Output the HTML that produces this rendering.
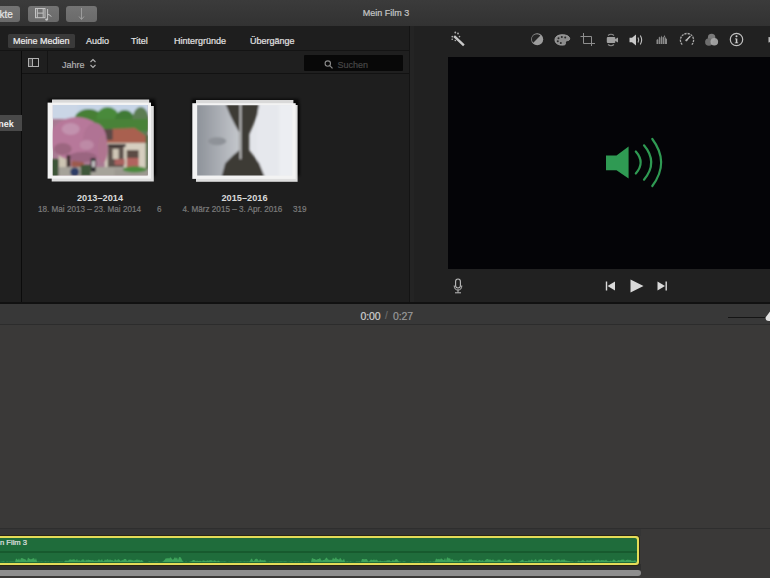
<!DOCTYPE html>
<html><head><meta charset="utf-8">
<style>
*{margin:0;padding:0;box-sizing:border-box}
html,body{width:770px;height:578px;overflow:hidden;background:#3a3938;font-family:"Liberation Sans",sans-serif}
.a{position:absolute}
#top{left:0;top:0;width:770px;height:26px;background:linear-gradient(#3b3b3b,#323232)}
.btn{position:absolute;top:6px;height:15.6px;background:linear-gradient(#747474,#6a6a6a);border-radius:3px}
.t{position:absolute;white-space:nowrap;line-height:1;-webkit-text-stroke:0.2px currentColor}
#lib{left:0;top:26px;width:410px;height:278px;background:#1e1e1e}
#viewer{left:410px;top:26px;width:360px;height:278px;background:#212121}
#video{left:448px;top:57px;width:322px;height:212px;background:#040407}
#tl{left:0;top:304px;width:770px;height:274px;background:#3a3938}
svg{position:absolute;overflow:visible}
</style></head><body>
<!-- top toolbar -->
<div id="top" class="a"></div>
<div class="btn" style="left:-4px;width:24px"></div>
<div class="t" style="left:-0.5px;top:9.5px;font-size:10px;color:#e6e6e6">kte</div>
<div class="btn" style="left:28px;width:31px"></div>
<svg style="left:34px;top:8px" width="20" height="14" viewBox="0 0 20 14">
  <g fill="none" stroke="#c4c4c4" stroke-width="1">
    <rect x="1.5" y="0.5" width="9.5" height="9.2"/>
    <line x1="3.3" y1="0.5" x2="3.3" y2="9.7"/><line x1="9.2" y1="0.5" x2="9.2" y2="9.7"/>
    <line x1="3.3" y1="5.1" x2="9.2" y2="5.1"/>
    <path d="M13.6 11.5 V1 M13.6 6.3 Q16.3 6.6 17.3 8.8"/>
  </g>
  <ellipse cx="12.6" cy="11.6" rx="1.5" ry="1.1" fill="#c4c4c4"/>
</svg>
<div class="btn" style="left:66px;width:31px"></div>
<svg style="left:76px;top:7px" width="12" height="14" viewBox="0 0 12 14">
  <g fill="none" stroke="#a0a0a0" stroke-width="0.9"><line x1="5.5" y1="1" x2="5.5" y2="12"/><path d="M3 9.5 L5.5 12.5 L8 9.5"/></g>
</svg>
<div class="t" style="left:0;width:772px;top:8.5px;text-align:center;font-size:9px;color:#c6c6c6">Mein Film 3</div>

<!-- library -->
<div id="lib" class="a"></div>
<div class="a" style="left:0;top:50px;width:410px;height:1px;background:#141414"></div>
<div class="a" style="left:21px;top:51px;width:389px;height:22px;background:#1f1f1f"></div>
<div class="a" style="left:21px;top:73px;width:389px;height:1px;background:#121212"></div>
<div class="a" style="left:21px;top:51px;width:1px;height:253px;background:#0b0b0b"></div>
<div class="a" style="left:46.5px;top:51px;width:1px;height:22px;background:#141414"></div>
<div class="a" style="left:8px;top:33.5px;width:67px;height:14px;background:#3a3a3a;border-radius:1.5px"></div>
<div class="t" style="left:13px;top:36.7px;font-size:9px;color:#eeeeee">Meine Medien</div>
<div class="t" style="left:86px;top:36.7px;font-size:9px;color:#e2e2e2">Audio</div>
<div class="t" style="left:131px;top:36.7px;font-size:9px;color:#e2e2e2">Titel</div>
<div class="t" style="left:174px;top:36.7px;font-size:9px;color:#e2e2e2">Hintergründe</div>
<div class="t" style="left:250px;top:36.7px;font-size:9px;color:#e2e2e2">Übergänge</div>
<svg style="left:27px;top:57px" width="13" height="11" viewBox="0 0 13 11">
  <rect x="1.5" y="1.5" width="10" height="8" fill="none" stroke="#b0b0b0" stroke-width="1"/>
  <rect x="2" y="2" width="3" height="7" fill="#444"/>
  <line x1="5.5" y1="1.5" x2="5.5" y2="9.5" stroke="#b0b0b0"/>
</svg>
<div class="t" style="left:62px;top:60.6px;font-size:9px;color:#b0b0b0">Jahre</div>
<svg style="left:89px;top:58px" width="8" height="11" viewBox="0 0 8 11">
  <path d="M1.5 4 L4 1.5 L6.5 4 M1.5 7 L4 9.5 L6.5 7" fill="none" stroke="#b0b0b0" stroke-width="1.1"/>
</svg>
<div class="a" style="left:304px;top:54.7px;width:98.5px;height:16.8px;background:#080808;border-radius:1px"></div>
<svg style="left:324px;top:60px" width="10" height="9" viewBox="0 0 10 9">
  <circle cx="3.8" cy="3.6" r="2.7" fill="none" stroke="#8a8a8a" stroke-width="1.1"/>
  <line x1="5.8" y1="5.6" x2="8.5" y2="8.3" stroke="#8a8a8a" stroke-width="1.2"/>
</svg>
<div class="t" style="left:337.5px;top:61px;font-size:9px;color:#474747">Suchen</div>

<!-- thumbnails -->
<svg style="left:40px;top:92px" width="120" height="96" viewBox="0 0 120 96">
  <defs>
    <filter id="sh" x="-20%" y="-20%" width="140%" height="140%"><feGaussianBlur stdDeviation="1.5"/></filter>
    <filter id="bl" x="-10%" y="-10%" width="120%" height="120%"><feGaussianBlur stdDeviation="1.1"/></filter>
    <filter id="bl2" x="-10%" y="-10%" width="120%" height="120%"><feGaussianBlur stdDeviation="1"/></filter>
    <clipPath id="c1"><rect x="0" y="0" width="95.1" height="70.5"/></clipPath>
  </defs>
  <rect x="8" y="7" width="107" height="76" fill="#000" opacity="0.75" filter="url(#sh)"/>
  <rect x="11" y="13" width="104" height="71" fill="#000" opacity="0.75" filter="url(#sh)"/>
  <rect x="12" y="7.5" width="97.2" height="70" fill="#d9d9d9"/>
  <rect x="11.7" y="14" width="102.1" height="75.5" fill="#dedede"/>
  <rect x="7.6" y="10.6" width="103.4" height="76" fill="#f3f3f3"/>
  <g transform="translate(12.7,13)" clip-path="url(#c1)">
    <rect x="0" y="0" width="95.1" height="70.5" fill="#a87a92"/>
    <g filter="url(#bl2)">
      <rect x="-3" y="-3" width="101" height="14" fill="#c6d4e6"/><rect x="-3" y="-3" width="28" height="17" fill="#cad6e6"/>
      <ellipse cx="36" cy="14" rx="14" ry="10" fill="#467f36"/>
      <ellipse cx="55" cy="12" rx="11" ry="10" fill="#4a8a3a"/>
      <ellipse cx="72" cy="16" rx="10" ry="11" fill="#3f7a35"/>
      <ellipse cx="88" cy="18" rx="9" ry="16" fill="#5b7d52"/>
      <rect x="26" y="14" width="70" height="12" fill="#4a8239"/>
      <polygon points="56,24 82,23 96,33 96,39 54,39" fill="#a9604f"/>
      <rect x="50" y="24" width="10" height="11" fill="#5c4a46"/>
      <rect x="52" y="38" width="44" height="25" fill="#d6cebf"/>
      <rect x="55" y="39" width="18" height="3" fill="#3e3634"/>
      <rect x="55" y="42" width="16" height="22" fill="#5d514c"/>
      <rect x="60" y="44" width="6" height="10" fill="#cfc6b6"/>
      <rect x="74" y="45" width="12" height="8" fill="#5c4c44"/>
      <rect x="74" y="53" width="12" height="9" fill="#b1635f"/>
      <rect x="62" y="54" width="10" height="6" fill="#a9625e"/>
      <rect x="93" y="30" width="4" height="40" fill="#4c6a44"/>
      <rect x="6" y="48" width="8" height="14" fill="#cdc5b3"/>
      <rect x="19" y="53" width="12" height="9" fill="#9c5a4e"/>
      <ellipse cx="24" cy="34" rx="27" ry="22" fill="#b7789a"/>
      <ellipse cx="42" cy="36" rx="12" ry="18" fill="#b07394"/>
      <ellipse cx="50" cy="44" rx="5" ry="14" fill="#b07590"/>
      <ellipse cx="18" cy="24" rx="9" ry="6" fill="#c292ae"/>
      <ellipse cx="34" cy="40" rx="7" ry="5" fill="#bd8aa6"/>
      <ellipse cx="10" cy="44" rx="9" ry="6" fill="#9c6680"/><ellipse cx="30" cy="52" rx="14" ry="5" fill="#9a6580"/>
      <rect x="-2" y="54" width="8" height="20" fill="#3e5538"/>
      <rect x="14" y="50" width="3.5" height="22" fill="#3b2f2b"/>
      <rect x="6" y="62" width="66" height="10" fill="#a6a39a"/>
      <rect x="28" y="60" width="10" height="11" fill="#40583a"/>
      <ellipse cx="82" cy="65" rx="12" ry="3.5" fill="#4c8a3c"/>
      <rect x="62" y="64" width="34" height="8" fill="#9d9a92"/>
      <ellipse cx="82" cy="64.5" rx="12" ry="3" fill="#4c8a3c"/>
      <ellipse cx="22" cy="67" rx="4.5" ry="4.5" fill="#2e3e66"/>
      <rect x="38" y="53" width="5" height="14" fill="#2e2e30"/>
      <rect x="39.5" y="56" width="2.5" height="6" fill="#d8d8d8"/>
    </g>
  </g>
</svg>
<svg style="left:184px;top:92px" width="120" height="96" viewBox="0 0 120 96">
  <defs>
    <clipPath id="c2"><rect x="0" y="0" width="95" height="70.3"/></clipPath>
  </defs>
  <rect x="8" y="7" width="107" height="76" fill="#000" opacity="0.75" filter="url(#sh)"/>
  <rect x="11" y="13" width="104" height="71" fill="#000" opacity="0.75" filter="url(#sh)"/>
  <rect x="12" y="8" width="97.4" height="70" fill="#d9d9d9"/>
  <rect x="12" y="13" width="101.6" height="76.8" fill="#dedede"/>
  <rect x="8.3" y="11.2" width="103.4" height="75.7" fill="#f3f3f3"/>
  <g transform="translate(13.2,13.2)" clip-path="url(#c2)">
    <defs><linearGradient id="g2" x1="0" x2="1" y1="0" y2="0"><stop offset="0" stop-color="#8a8f96"/><stop offset="1" stop-color="#c4c7cc"/></linearGradient></defs>
    <rect x="0" y="0" width="95" height="70.3" fill="#e3e5ea"/>
    <g filter="url(#bl)">
      <rect x="-3" y="-3" width="45" height="78" fill="url(#g2)"/>
      <ellipse cx="20" cy="36" rx="9" ry="4" fill="#8e9298"/>
      <rect x="60" y="-3" width="38" height="78" fill="#e6e8ed"/>
      <polygon points="28,-2 62,-2 60,10 56,20 52,29 52,45 56,50 62,58 68,73 24,73 28,58 36,50 42,45 42,27 38,20 33,10" fill="#3d3a35"/>
      <rect x="42.5" y="-2" width="1.6" height="56" fill="#cfd0d2"/>
      <rect x="82" y="-3" width="14" height="78" fill="#eceef2"/>
    </g>
  </g>
</svg>
<div class="t" style="left:77px;top:193.8px;font-size:9.2px;font-weight:bold;color:#dadada;-webkit-text-stroke:0">2013–2014</div>
<div class="t" style="left:38px;top:205.6px;font-size:8.15px;color:#7c7c7c">18. Mai 2013 – 23. Mai 2014</div>
<div class="t" style="left:157px;top:205.6px;font-size:8.15px;color:#7c7c7c">6</div>
<div class="t" style="left:221.5px;top:193.8px;font-size:9.2px;font-weight:bold;color:#dadada;-webkit-text-stroke:0">2015–2016</div>
<div class="t" style="left:182.5px;top:205.6px;font-size:8.15px;color:#7c7c7c">4. März 2015 – 3. Apr. 2016</div>
<div class="t" style="left:293px;top:205.6px;font-size:8.15px;color:#7c7c7c">319</div>

<!-- sidebar label -->
<div class="a" style="left:0;top:115.2px;width:22px;height:15.6px;background:#494949"></div>
<div class="t" style="left:-1.8px;top:120px;font-size:9px;font-weight:bold;color:#f0f0f0;-webkit-text-stroke:0">nek</div>

<!-- viewer -->
<div id="viewer" class="a"></div>
<div class="a" style="left:409px;top:26px;width:1px;height:278px;background:#141414"></div>
<div class="a" style="left:410px;top:26px;width:4px;height:278px;background:#242424"></div>
<div id="video" class="a"></div>
<!-- viewer toolbar icons -->
<svg style="left:448px;top:30px" width="24" height="20" viewBox="0 0 24 20">
  <line x1="7" y1="7" x2="15" y2="14.5" stroke="#c8c8c8" stroke-width="2.4" stroke-linecap="square"/>
  <g fill="#b0b0b0">
    <circle cx="4.3" cy="6.6" r="0.9"/><circle cx="7.3" cy="2.5" r="0.9"/><circle cx="10" cy="3.5" r="0.9"/>
    <circle cx="11.5" cy="6.6" r="0.8"/><circle cx="4.2" cy="9.3" r="0.8"/><circle cx="7.3" cy="10.5" r="0.8"/>
  </g>
</svg>
<svg style="left:530px;top:33px" width="14" height="14" viewBox="0 0 14 14">
  <circle cx="7.2" cy="6.3" r="6" fill="#9c9c9c"/>
  <path d="M3.3 9.7 A4.6 4.6 0 0 1 10.4 2.6 Z" fill="#262626"/>
</svg>
<svg style="left:554px;top:34px" width="17" height="12" viewBox="0 0 17 12">
  <path d="M8 0.8 C13 0.6 16.5 3 15.5 5.6 C14.8 7.2 12 6 11.5 7.8 C11 9.5 12.5 10.6 9.5 11 C4 11.6 0.8 9 1 5.6 C1.2 2.6 4 0.9 8 0.8 Z" fill="#8c8c8c" stroke="#a8a8a8" stroke-width="0.9"/>
  <g fill="#2a2a2a"><circle cx="4.5" cy="4.3" r="1"/><circle cx="7.8" cy="3" r="1"/><circle cx="11.2" cy="3.6" r="1"/><circle cx="3.8" cy="7.3" r="1"/><circle cx="6.8" cy="9" r="1"/></g>
</svg>
<svg style="left:580px;top:33px" width="16" height="14" viewBox="0 0 16 14">
  <path d="M3.5 0 V10.5 H15 M0.5 3.5 H11.5 V13" fill="none" stroke="#8e8e8e" stroke-width="1"/>
</svg>
<svg style="left:606px;top:33px" width="13" height="14" viewBox="0 0 13 14">
  <rect x="0.8" y="4" width="8.5" height="6" rx="1" fill="#a0a0a0"/>
  <path d="M9 6.2 L12 4.5 V9.5 L9 7.8 Z" fill="#a0a0a0"/>
  <path d="M2 2.5 Q5 0 8 2.5" fill="none" stroke="#8a8a8a" stroke-width="1.2"/>
  <path d="M2 11.5 Q5 14 8 11.5" fill="none" stroke="#8a8a8a" stroke-width="1.2"/>
</svg>
<svg style="left:629px;top:34px" width="15" height="12" viewBox="0 0 15 12">
  <path d="M0.5 3.8 H3 L7 0.5 V11.5 L3 8.2 H0.5 Z" fill="#c8c8c8"/>
  <path d="M9 3.5 Q10.5 6 9 8.5" fill="none" stroke="#c0c0c0" stroke-width="1.1"/>
  <path d="M11.3 1.5 Q14 6 11.3 10.5" fill="none" stroke="#c0c0c0" stroke-width="1.1"/>
</svg>
<svg style="left:656px;top:34px" width="12" height="11" viewBox="0 0 12 11">
  <path d="M0.5 10 V6 L1.5 5 L2.5 6 V4 L3.5 2.5 L4.5 4.5 L5.5 1.5 L6.5 4 L7.5 3 L8.5 1 L9.5 3.5 L10.5 5 L11 4.5 V10 Z" fill="#8a8a8a"/>
  <g stroke="#1f1f1f" stroke-width="0.5"><line x1="2.5" y1="4" x2="2.5" y2="10"/><line x1="4.5" y1="4" x2="4.5" y2="10"/><line x1="6.5" y1="4" x2="6.5" y2="10"/><line x1="8.5" y1="3" x2="8.5" y2="10"/></g>
</svg>
<svg style="left:679px;top:32px" width="16" height="15" viewBox="0 0 16 15">
  <path d="M3.2 12.6 A6.6 6.6 0 1 1 12.8 12.6" fill="none" stroke="#a8a8a8" stroke-width="1.3" stroke-dasharray="2.2 0.9"/>
  <path d="M7.2 8.6 L11 4.6" stroke="#c0c0c0" stroke-width="1.4" stroke-linecap="round"/>
  <circle cx="7.5" cy="8.2" r="1" fill="#b0b0b0"/>
</svg>
<svg style="left:705px;top:33px" width="14" height="14" viewBox="0 0 14 14">
  <circle cx="6.6" cy="4.5" r="3.7" fill="#7a7a7a"/>
  <circle cx="3.9" cy="9" r="3.8" fill="#6e6e6e"/>
  <circle cx="9.3" cy="8.8" r="3.8" fill="#a8a8a8" opacity="0.92"/>
</svg>
<svg style="left:729px;top:32px" width="16" height="15" viewBox="0 0 16 15">
  <circle cx="7.5" cy="7.5" r="6.2" fill="none" stroke="#c0c0c0" stroke-width="1.2"/>
  <circle cx="7.5" cy="4.3" r="1" fill="#d0d0d0"/>
  <path d="M6 6.5 H8.3 V10.5 H9.2 V11.3 H5.8 V10.5 H6.8 V7.3 H6 Z" fill="#d0d0d0"/>
</svg>
<svg style="left:764px;top:35px" width="8" height="10" viewBox="0 0 8 10">
  <path d="M4 2 H7 V7.5 H4 Z" fill="#707070"/><path d="M5 2.5 L7 1.5 V7 L5 7 Z" fill="#b8b8b8"/>
</svg>
<!-- big speaker -->
<svg style="left:600px;top:130px" width="70" height="64" viewBox="0 0 70 64">
  <path d="M6 25.5 H16.5 L28.6 16.6 V48.4 L16.5 40.2 H6 Z" fill="#2f9a53"/>
  <g fill="none" stroke="#2f9a53" stroke-width="2.2" stroke-linecap="round">
    <path d="M35.8 21.5 Q45.5 32.5 35.8 43.5"/>
    <path d="M44 15.3 Q58.5 32.5 44 49.7"/>
    <path d="M52.3 9 Q70 32.5 52.3 56"/>
  </g>
</svg>
<!-- playback controls -->
<svg style="left:453px;top:278px" width="10" height="16" viewBox="0 0 10 16">
  <rect x="2.6" y="1" width="4.8" height="9" rx="2.4" fill="none" stroke="#bdbdbd" stroke-width="1.1"/>
  <path d="M1.2 7.5 Q1.2 12 5 12 Q8.8 12 8.8 7.5" fill="none" stroke="#bdbdbd" stroke-width="1"/>
  <line x1="5" y1="12" x2="5" y2="14.5" stroke="#bdbdbd" stroke-width="1"/>
  <line x1="2" y1="14.8" x2="8" y2="14.8" stroke="#bdbdbd" stroke-width="1"/>
</svg>
<svg style="left:604px;top:280px" width="14" height="12" viewBox="0 0 14 12">
  <rect x="1.8" y="1.5" width="1.4" height="9" fill="#dadada"/>
  <path d="M3.5 6 L11 1.5 V10.5 Z" fill="#dadada"/>
</svg>
<svg style="left:628px;top:278px" width="18" height="16" viewBox="0 0 18 16">
  <path d="M2.5 1.5 L15.5 8 L2.5 14.5 Z" fill="#dadada"/>
</svg>
<svg style="left:655px;top:280px" width="14" height="12" viewBox="0 0 14 12">
  <path d="M2.5 1.5 L10 6 L2.5 10.5 Z" fill="#dadada"/>
  <rect x="10.5" y="1.5" width="1.4" height="9" fill="#dadada"/>
</svg>

<!-- timeline -->
<div id="tl" class="a"></div>
<div class="a" style="left:0;top:302px;width:770px;height:2px;background:#111"></div>
<div class="a" style="left:0;top:304px;width:770px;height:21px;background:#383838"></div>
<div class="a" style="left:0;top:324px;width:770px;height:1px;background:#2c2c2c"></div>
<div class="t" style="left:360.5px;top:310.6px;font-size:10.5px;color:#d0d0d0;letter-spacing:-0.1px">0:00</div>
<div class="t" style="left:385px;top:310.6px;font-size:10px;color:#6a6a6a">/</div>
<div class="t" style="left:393px;top:310.6px;font-size:10.5px;color:#9a9a9a;letter-spacing:-0.1px">0:27</div>
<!-- zoom slider -->
<div class="a" style="left:728px;top:316.5px;width:40px;height:1.2px;background:#151515"></div>
<svg style="left:764px;top:310px" width="10" height="14" viewBox="0 0 10 14"><path d="M1.5 7.5 L6 1.5 Q7.5 0.5 9 1.5 L10 2 V11 H5 Q1.5 11 1.5 7.5 Z" fill="#e2e2e2"/></svg>
<!-- clip area -->
<div class="a" style="left:0;top:528px;width:770px;height:1px;background:#2e2e2e"></div>
<div class="a" style="left:0;top:529px;width:641px;height:7px;background:#353535"></div>
<div class="a" style="left:0;top:564px;width:641px;height:6px;background:#2f2f2f"></div>
<div class="a" style="left:-4px;top:535.9px;width:643.2px;height:28.9px;background:#e4dc58;border-radius:3px;box-shadow:0 0 0 0.9px #2a2416"></div>
<div class="a" style="left:-4px;top:538.3px;width:641px;height:24.3px;background:#1f6c3b;border-radius:2px"></div>
<div class="a" style="left:0;top:551.2px;width:637px;height:1.4px;background:#175a2e"></div>
<div class="t" style="left:0;top:539px;font-size:7.6px;color:#e2e2e2">n Film 3</div>
<svg style="left:0;top:548px" width="637" height="15" viewBox="0 0 637 15"><path d="M0 14 L0 13.9 L1 13.7 L2 13.8 L3 13.6 L4 13.6 L5 14.0 L6 14.0 L7 13.5 L8 13.8 L9 13.9 L10 13.4 L11 13.7 L12 13.5 L13 13.7 L14 13.6 L15 13.9 L16 10.6 L17 10.9 L18 12.2 L19 10.2 L20 12.8 L21 9.9 L22 10.3 L23 10.3 L24 11.3 L25 11.1 L26 11.9 L27 13.0 L28 9.6 L29 10.6 L30 10.9 L31 11.4 L32 10.7 L33 10.4 L34 9.9 L35 12.2 L36 9.9 L37 13.5 L38 13.7 L39 13.6 L40 13.9 L41 13.5 L42 13.7 L43 13.8 L44 14.0 L45 13.5 L46 13.4 L47 13.9 L48 13.5 L49 13.8 L50 13.9 L51 13.8 L52 13.5 L53 13.5 L54 14.0 L55 13.6 L56 14.0 L57 13.6 L58 13.8 L59 13.5 L60 13.4 L61 13.7 L62 13.4 L63 13.8 L64 14.0 L65 12.8 L66 12.5 L67 12.8 L68 12.8 L69 12.2 L70 11.0 L71 11.9 L72 11.5 L73 11.7 L74 10.9 L75 12.0 L76 12.4 L77 10.8 L78 12.9 L79 12.0 L80 12.8 L81 12.8 L82 11.6 L83 11.5 L84 11.4 L85 13.4 L86 11.5 L87 12.4 L88 11.6 L89 12.1 L90 12.1 L91 12.3 L92 12.6 L93 11.7 L94 13.1 L95 12.6 L96 12.5 L97 12.7 L98 12.2 L99 11.1 L100 12.6 L101 12.2 L102 11.0 L103 13.2 L104 12.9 L105 11.2 L106 12.5 L107 11.2 L108 11.2 L109 12.6 L110 11.2 L111 12.2 L112 12.0 L113 12.5 L114 12.9 L115 11.0 L116 12.0 L117 12.5 L118 11.3 L119 11.5 L120 12.3 L121 13.2 L122 11.7 L123 12.6 L124 11.0 L125 11.0 L126 11.0 L127 12.9 L128 12.5 L129 11.5 L130 12.0 L131 11.6 L132 12.4 L133 11.9 L134 13.1 L135 11.8 L136 12.5 L137 11.0 L138 12.6 L139 11.6 L140 12.8 L141 12.3 L142 12.0 L143 13.5 L144 14.0 L145 14.0 L146 13.9 L147 13.9 L148 14.0 L149 13.4 L150 13.5 L151 13.9 L152 13.7 L153 13.8 L154 13.8 L155 13.8 L156 13.6 L157 13.6 L158 13.8 L159 13.9 L160 13.8 L161 13.9 L162 13.7 L163 13.6 L164 12.4 L165 11.4 L166 9.9 L167 10.7 L168 9.8 L169 10.7 L170 9.6 L171 9.6 L172 11.2 L173 11.8 L174 10.6 L175 8.9 L176 10.7 L177 9.2 L178 12.2 L179 9.2 L180 8.9 L181 9.7 L182 12.0 L183 13.6 L184 14.0 L185 13.9 L186 13.5 L187 14.0 L188 13.9 L189 13.9 L190 13.5 L191 13.5 L192 13.0 L193 12.0 L194 12.0 L195 12.4 L196 13.2 L197 12.5 L198 13.1 L199 12.9 L200 12.8 L201 13.0 L202 13.5 L203 12.3 L204 12.7 L205 12.7 L206 13.3 L207 12.5 L208 12.6 L209 13.0 L210 12.1 L211 12.5 L212 12.3 L213 13.5 L214 12.2 L215 12.5 L216 13.1 L217 13.4 L218 12.4 L219 12.9 L220 13.4 L221 13.8 L222 13.6 L223 13.8 L224 13.5 L225 13.6 L226 13.8 L227 13.9 L228 14.0 L229 13.7 L230 13.8 L231 13.9 L232 13.8 L233 13.8 L234 13.5 L235 13.9 L236 13.4 L237 13.7 L238 13.6 L239 13.7 L240 13.5 L241 13.5 L242 13.7 L243 13.7 L244 13.6 L245 13.5 L246 13.8 L247 13.6 L248 13.4 L249 13.7 L250 13.1 L251 11.1 L252 10.6 L253 13.1 L254 13.1 L255 11.2 L256 10.7 L257 10.8 L258 11.8 L259 13.3 L260 10.9 L261 12.0 L262 12.6 L263 12.0 L264 12.8 L265 11.4 L266 13.8 L267 13.7 L268 13.9 L269 13.8 L270 13.6 L271 13.9 L272 13.5 L273 13.5 L274 13.9 L275 13.4 L276 13.8 L277 13.5 L278 13.5 L279 13.8 L280 13.6 L281 13.6 L282 13.5 L283 13.8 L284 13.5 L285 13.4 L286 13.6 L287 13.7 L288 13.9 L289 13.7 L290 13.8 L291 13.6 L292 13.6 L293 13.7 L294 13.9 L295 13.6 L296 13.6 L297 13.9 L298 13.5 L299 13.6 L300 13.9 L301 13.4 L302 13.9 L303 13.8 L304 13.6 L305 13.6 L306 13.7 L307 13.6 L308 13.7 L309 13.8 L310 13.9 L311 14.0 L312 9.9 L313 10.5 L314 11.1 L315 11.0 L316 12.1 L317 11.4 L318 11.1 L319 10.9 L320 9.7 L321 11.7 L322 12.7 L323 11.9 L324 11.9 L325 11.6 L326 9.8 L327 9.8 L328 11.8 L329 11.6 L330 12.2 L331 11.4 L332 12.2 L333 9.4 L334 11.0 L335 10.4 L336 9.1 L337 11.3 L338 10.7 L339 11.9 L340 9.7 L341 10.7 L342 12.4 L343 12.3 L344 10.6 L345 13.7 L346 13.7 L347 13.4 L348 13.5 L349 13.9 L350 13.5 L351 13.6 L352 14.0 L353 13.8 L354 13.9 L355 14.0 L356 13.7 L357 13.4 L358 13.8 L359 13.5 L360 13.6 L361 13.9 L362 11.1 L363 11.0 L364 11.3 L365 11.2 L366 11.1 L367 11.3 L368 13.3 L369 13.4 L370 12.5 L371 11.4 L372 12.0 L373 12.2 L374 11.3 L375 12.5 L376 11.4 L377 12.1 L378 12.8 L379 13.4 L380 12.6 L381 13.0 L382 13.2 L383 13.0 L384 13.4 L385 12.5 L386 13.4 L387 11.9 L388 12.7 L389 12.0 L390 12.8 L391 13.2 L392 12.9 L393 11.6 L394 13.3 L395 11.4 L396 11.2 L397 10.9 L398 12.4 L399 13.5 L400 13.6 L401 13.8 L402 13.9 L403 13.6 L404 13.4 L405 13.6 L406 14.0 L407 14.0 L408 13.9 L409 13.9 L410 14.0 L411 14.0 L412 13.6 L413 13.5 L414 13.9 L415 13.4 L416 13.7 L417 13.5 L418 13.4 L419 13.4 L420 14.0 L421 13.8 L422 13.6 L423 13.4 L424 13.9 L425 13.8 L426 13.5 L427 13.9 L428 13.8 L429 13.8 L430 13.6 L431 13.4 L432 13.9 L433 13.6 L434 13.6 L435 13.5 L436 10.5 L437 11.1 L438 11.5 L439 10.7 L440 11.7 L441 10.3 L442 11.0 L443 11.7 L444 12.2 L445 9.8 L446 13.0 L447 9.5 L448 9.4 L449 10.8 L450 9.9 L451 12.5 L452 11.0 L453 11.9 L454 12.9 L455 12.1 L456 13.0 L457 11.7 L458 13.5 L459 12.5 L460 11.9 L461 11.4 L462 11.4 L463 13.3 L464 12.8 L465 13.4 L466 12.5 L467 12.6 L468 13.0 L469 11.3 L470 11.7 L471 11.3 L472 11.8 L473 12.7 L474 11.8 L475 12.5 L476 12.0 L477 12.8 L478 13.0 L479 11.9 L480 12.1 L481 12.9 L482 12.3 L483 12.3 L484 13.4 L485 12.6 L486 11.5 L487 11.0 L488 11.1 L489 12.1 L490 11.2 L491 12.0 L492 12.2 L493 11.2 L494 12.6 L495 12.8 L496 12.4 L497 12.9 L498 11.5 L499 12.1 L500 11.5 L501 13.2 L502 12.4 L503 13.4 L504 11.5 L505 11.0 L506 11.2 L507 12.6 L508 12.0 L509 11.9 L510 11.3 L511 12.0 L512 13.5 L513 13.8 L514 13.9 L515 13.5 L516 14.0 L517 13.9 L518 13.7 L519 13.7 L520 13.3 L521 12.6 L522 12.0 L523 11.4 L524 13.4 L525 12.9 L526 13.1 L527 12.9 L528 13.2 L529 11.4 L530 13.2 L531 12.1 L532 11.6 L533 12.7 L534 12.7 L535 11.4 L536 11.3 L537 13.2 L538 12.9 L539 11.2 L540 12.0 L541 11.1 L542 11.8 L543 13.0 L544 12.6 L545 11.0 L546 12.2 L547 12.1 L548 12.1 L549 12.6 L550 11.9 L551 11.3 L552 11.1 L553 12.9 L554 11.9 L555 12.4 L556 12.6 L557 11.6 L558 11.9 L559 11.1 L560 12.6 L561 12.6 L562 11.3 L563 12.4 L564 11.1 L565 12.2 L566 12.7 L567 12.5 L568 13.3 L569 12.8 L570 13.6 L571 13.5 L572 13.6 L573 13.5 L574 14.0 L575 13.8 L576 13.4 L577 14.0 L578 12.7 L579 12.7 L580 13.5 L581 12.8 L582 12.8 L583 11.5 L584 13.0 L585 13.0 L586 13.4 L587 11.8 L588 13.0 L589 12.3 L590 13.0 L591 11.5 L592 13.5 L593 12.9 L594 12.8 L595 12.8 L596 11.5 L597 12.7 L598 11.6 L599 12.0 L600 13.1 L601 11.9 L602 12.2 L603 12.3 L604 12.3 L605 12.8 L606 11.6 L607 12.8 L608 12.9 L609 13.3 L610 13.0 L611 12.5 L612 13.5 L613 11.7 L614 11.5 L615 12.3 L616 13.0 L617 13.2 L618 12.1 L619 12.3 L620 12.6 L621 12.1 L622 11.6 L623 11.8 L624 11.5 L625 12.9 L626 11.9 L627 12.1 L628 11.6 L629 12.3 L630 11.7 L631 12.3 L632 13.1 L633 12.4 L634 12.9 L635 11.7 L636 13.4 L637 13.8 L637 14 Z" fill="#3fa35b"/></svg>
<div class="a" style="left:-4px;top:570px;width:645px;height:6px;background:#8e8e8e;border-radius:3px"></div>

</body></html>
